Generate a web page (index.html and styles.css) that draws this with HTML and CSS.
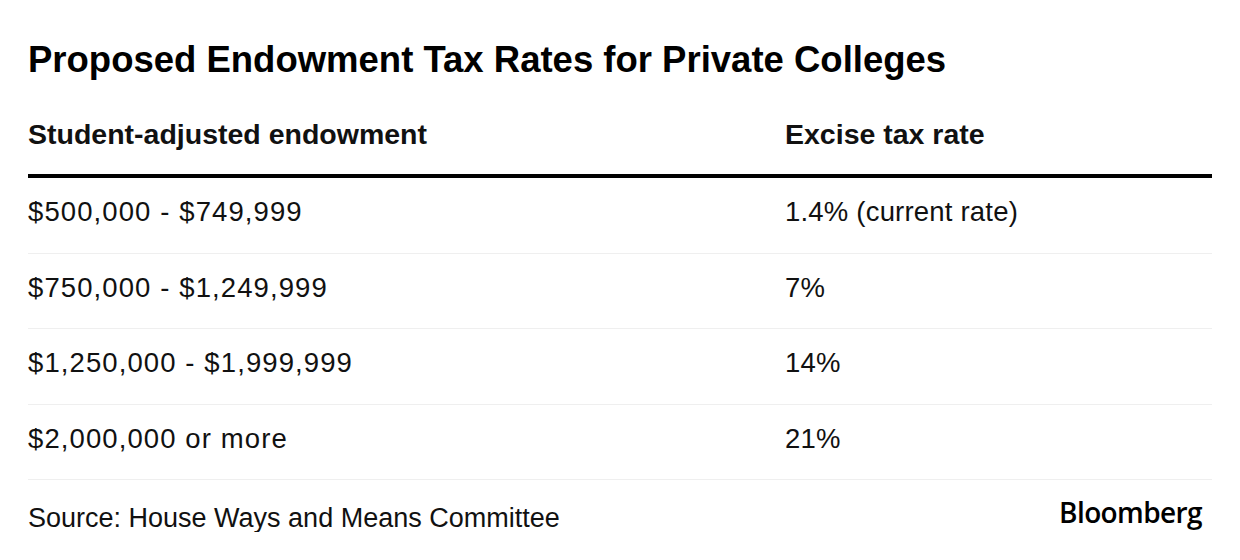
FILE: index.html
```html
<!DOCTYPE html>
<html>
<head>
<meta charset="utf-8">
<link rel="stylesheet" href="styles.css">
</head>
<body>
<div class="chart">
  <h1 class="title">Proposed Endowment Tax Rates for Private Colleges</h1>
  <div class="table">
    <div class="row head">
      <div class="c1">Student-adjusted endowment</div>
      <div class="c2">Excise tax rate</div>
    </div>
    <div class="row">
      <div class="c1">$500,000 - $749,999</div>
      <div class="c2">1.4% (current rate)</div>
    </div>
    <div class="row">
      <div class="c1">$750,000 - $1,249,999</div>
      <div class="c2">7%</div>
    </div>
    <div class="row">
      <div class="c1">$1,250,000 - $1,999,999</div>
      <div class="c2">14%</div>
    </div>
    <div class="row">
      <div class="c1">$2,000,000 or more</div>
      <div class="c2">21%</div>
    </div>
  </div>
  <div class="footer">
    <div class="source">Source: House Ways and Means Committee</div>
    <div class="logo">Bloomberg</div>
  </div>
</div>
</body>
</html>
```
FILE: styles.css
```css
html, body {
  margin: 0;
  padding: 0;
  background: #fff;
}
body {
  font-family: "Liberation Sans", Arial, sans-serif;
  color: #111;
}
.chart {
  width: 1184px;
  padding: 0 28px;
}
.title {
  margin: 0;
  padding-top: 42px;
  font-size: 36.5px;
  line-height: 36.5px;
  font-weight: bold;
  color: #000;
}
.table {
  margin-top: 41px;
}
.row {
  display: grid;
  grid-template-columns: 757px 1fr;
  box-sizing: border-box;
  height: 75.5px;
  align-items: center;
  padding-bottom: 7px;
  font-size: 27.5px;
  line-height: 27.5px;
  border-bottom: 1px solid #efefef;
}
.row .c1 {
  letter-spacing: 1.1px;
}
.row .c2 {
  letter-spacing: 0.2px;
}
.row.head {
  font-weight: bold;
  font-size: 28.5px;
  line-height: 28.5px;
  height: auto;
  align-items: start;
  padding-bottom: 26px;
  border-bottom: 4px solid #000;
}
.row.head .c1,
.row.head .c2 {
  letter-spacing: 0;
}
.footer {
  display: flex;
  justify-content: space-between;
  align-items: flex-start;
  padding: 25px 10px 0 0;
}
.source {
  font-size: 27px;
  line-height: 27px;
}
.logo {
  margin-top: -7px;
  font-family: "Open Sans", "Liberation Sans", sans-serif;
  font-weight: 600;
  font-size: 28px;
  line-height: 28px;
  letter-spacing: -0.6px;
  color: #000;
}
```
